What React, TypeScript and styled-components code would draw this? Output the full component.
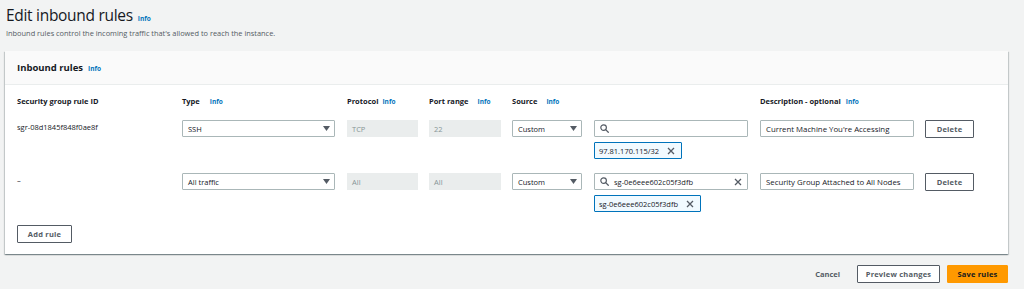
import React from 'react';
import styled, { createGlobalStyle } from 'styled-components';

const GlobalStyle = createGlobalStyle`
  html, body {
    margin: 0;
    padding: 0;
    background: #f2f3f3;
    font-family: "Open Sans", "Noto Sans", Arial, sans-serif;
    color: #16191f;
  }
`;

interface Rule {
  id: string;
  type: string;
  protocol: string;
  port: string;
  source: string;
  search: string;
  token: string;
  description: string;
}

const rules: Rule[] = [
  {
    id: 'sgr-08d1845f848f0ae8f',
    type: 'SSH',
    protocol: 'TCP',
    port: '22',
    source: 'Custom',
    search: '',
    token: '97.81.170.115/32',
    description: "Current Machine You're Accessing",
  },
  {
    id: '–',
    type: 'All traffic',
    protocol: 'All',
    port: 'All',
    source: 'Custom',
    search: 'sg-0e6eee602c05f3dfb',
    token: 'sg-0e6eee602c05f3dfb',
    description: 'Security Group Attached to All Nodes',
  },
];

const Caret = () => (
  <svg width="7" height="5" viewBox="0 0 7 5">
    <path d="M0 0h7L3.5 5z" fill="#545b64" />
  </svg>
);

const SearchIcon = () => (
  <svg width="9" height="9" viewBox="0 0 10 10">
    <circle cx="4" cy="4" r="3.1" fill="none" stroke="#545b64" strokeWidth="1.3" />
    <path d="M6.3 6.3L9.2 9.2" stroke="#545b64" strokeWidth="1.4" strokeLinecap="round" />
  </svg>
);

const CloseIcon = () => (
  <svg width="8" height="8" viewBox="0 0 8 8">
    <path d="M1 1l6 6M7 1L1 7" stroke="#545b64" strokeWidth="1.3" />
  </svg>
);

const App = () => {
  return (
    <Page>
      <GlobalStyle />
      <Title>
        Edit inbound rules <Info>Info</Info>
      </Title>
      <Subtitle>Inbound rules control the incoming traffic that's allowed to reach the instance.</Subtitle>

      <Panel>
        <PanelHeader>
          <PanelTitle>
            Inbound rules<Info>Info</Info>
          </PanelTitle>
        </PanelHeader>
        <PanelBody>
          <Grid>
            <Heading>Security group rule ID</Heading>
            <Heading>
              Type<Info $gap={10}>Info</Info>
            </Heading>
            <Heading>
              Protocol<Info $gap={4}>Info</Info>
            </Heading>
            <Heading>
              Port range<Info $gap={9}>Info</Info>
            </Heading>
            <Heading>
              Source<Info $gap={9}>Info</Info>
            </Heading>
            <Heading />
            <Heading>
              Description - optional<Info $gap={5}>Info</Info>
            </Heading>
            <Heading />

            {rules.map((rule) => (
              <React.Fragment key={rule.id}>
                <IdCell>{rule.id}</IdCell>
                <Cell>
                  <Select $width={153}>
                    <span>{rule.type}</span>
                    <Caret />
                  </Select>
                </Cell>
                <Cell>
                  <Disabled $width={71}>{rule.protocol}</Disabled>
                </Cell>
                <Cell>
                  <Disabled $width={72}>{rule.port}</Disabled>
                </Cell>
                <Cell>
                  <Select $width={70}>
                    <span>{rule.source}</span>
                    <Caret />
                  </Select>
                </Cell>
                <Cell>
                  <SearchBox>
                    <SearchIcon />
                    <SearchText>{rule.search}</SearchText>
                    {rule.search && <CloseIcon />}
                  </SearchBox>
                  <Token>
                    {rule.token}
                    <CloseIcon />
                  </Token>
                </Cell>
                <Cell>
                  <TextInput>{rule.description}</TextInput>
                </Cell>
                <Cell>
                  <Button $width={49}>Delete</Button>
                </Cell>
              </React.Fragment>
            ))}
          </Grid>
          <Button $width={55}>Add rule</Button>
        </PanelBody>
      </Panel>

      <Footer>
        <LinkButton>Cancel</LinkButton>
        <Button $width={83}>Preview changes</Button>
        <PrimaryButton>Save rules</PrimaryButton>
      </Footer>
    </Page>
  );
};

const Page = styled.div`
  width: 1024px;
  height: 289px;
  box-sizing: border-box;
  padding: 5px 16px 0 5px;
  overflow: hidden;
`;

const Title = styled.h1`
  margin: 0 0 0 1px;
  font-size: 15.5px;
  letter-spacing: -0.3px;
  line-height: 20px;
  font-weight: 400;
  display: flex;
  align-items: baseline;
`;

const Info = styled.span<{ $gap?: number }>`
  margin-left: ${(p) => p.$gap ?? 5}px;
  font-size: 6.5px;
  line-height: 1;
  letter-spacing: 0;
  font-weight: 700;
  color: #0073bb;
`;

const Subtitle = styled.p`
  margin: 3px 0 0 1px;
  font-size: 7.4px;
  line-height: 10px;
  color: #545b64;
`;

const Panel = styled.section`
  margin-top: 13px;
  background: #fff;
  box-shadow: 0 1px 1px 0 rgba(0, 28, 36, 0.3), 1px 1px 1px 0 rgba(0, 28, 36, 0.15),
    -1px 1px 1px 0 rgba(0, 28, 36, 0.15);
`;

const PanelHeader = styled.div`
  height: 34px;
  box-sizing: border-box;
  padding: 0 12px;
  background: #fafafa;
  border-bottom: 1px solid #eaeded;
  display: flex;
  align-items: center;
`;

const PanelTitle = styled.h2`
  margin: 0;
  font-size: 9.5px;
  line-height: 14px;
  font-weight: 700;
  display: flex;
  align-items: baseline;
`;

const PanelBody = styled.div`
  padding: 10px 12px 11px;
  display: flex;
  flex-direction: column;
  align-items: flex-start;
`;

const Grid = styled.div`
  display: grid;
  grid-template-columns: 165px 165px 82px 83px 82px 166px 165px 1fr;
  row-gap: 13px;
  margin-bottom: 12px;
  align-self: stretch;
`;

const Heading = styled.div`
  font-size: 7.5px;
  line-height: 12px;
  font-weight: 700;
  display: flex;
  align-items: baseline;
`;

const Cell = styled.div`
  display: flex;
  flex-direction: column;
  align-items: flex-start;
  gap: 5px;
  min-height: 39px;
  margin-bottom: 1px;
`;

const IdCell = styled.div`
  font-size: 7.5px;
  line-height: 15px;
  color: #16191f;
`;

const Control = styled.div<{ $width?: number }>`
  width: ${(p) => (p.$width ? `${p.$width}px` : 'auto')};
  height: 17px;
  box-sizing: border-box;
  display: flex;
  align-items: center;
  padding: 0 5px;
  font-size: 7.5px;
  white-space: nowrap;
`;

const Select = styled(Control)`
  justify-content: space-between;
  border: 1px solid #aab7b8;
  border-radius: 1px;
  background: #fff;
  padding: 0 4px 0 5px;
`;

const Disabled = styled(Control)`
  background: #eaeded;
  color: #879596;
`;

const SearchBox = styled(Control)`
  width: 154px;
  border: 1px solid #aab7b8;
  border-radius: 1px;
  gap: 5px;
  padding: 0 5px;
`;

const SearchText = styled.span`
  flex: 1;
`;

const TextInput = styled(Control)`
  width: 154px;
  border: 1px solid #aab7b8;
  border-radius: 1px;
  color: #16191f;
  font-size: 7.8px;
`;

const Token = styled(Control)`
  border: 1px solid #0073bb;
  border-radius: 1px;
  background: #f1faff;
  gap: 8px;
  padding: 0 6px 0 4px;
`;

const Button = styled.button<{ $width?: number }>`
  width: ${(p) => (p.$width ? `${p.$width}px` : 'auto')};
  height: 18px;
  padding: 0;
  display: inline-flex;
  align-items: center;
  justify-content: center;
  border: 1px solid #545b64;
  border-radius: 1px;
  background: #fff;
  color: #545b64;
  font-family: inherit;
  font-size: 7.5px;
  font-weight: 700;
  letter-spacing: 0.2px;
`;

const PrimaryButton = styled(Button)`
  width: 61px;
  background: #ff9900;
  border-color: #ff9900;
  color: #16191f;
`;

const LinkButton = styled.span`
  font-size: 7.5px;
  font-weight: 700;
  color: #545b64;
  margin-right: 10px;
`;

const Footer = styled.div`
  margin-top: 11px;
  display: flex;
  justify-content: flex-end;
  align-items: center;
  gap: 7px;
`;

export default App;
